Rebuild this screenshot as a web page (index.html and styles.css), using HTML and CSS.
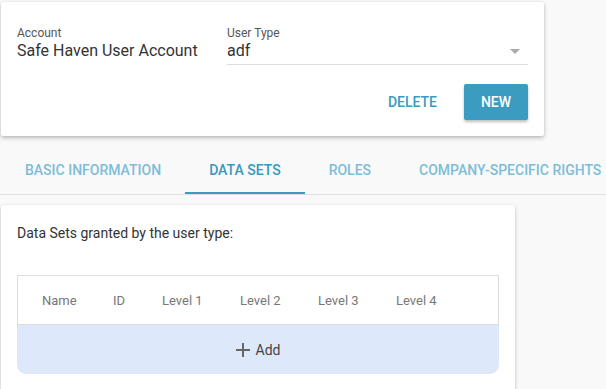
FILE: index.html
```html
<!DOCTYPE html>
<html lang="en">
<head>
  <meta charset="UTF-8" />
  <meta name="viewport" content="width=device-width, initial-scale=1.0" />
  <title>User Type</title>
  <link rel="stylesheet" href="styles.css">
</head>
<body>
  <div class="header-card">
    <div class="fields">
      <div class="field account">
        <div class="field-label">Account</div>
        <div class="field-value">Safe Haven User Account</div>
      </div>
      <div class="field select">
        <div class="field-label">User Type</div>
        <div class="select-box">
          <span class="field-value">adf</span>
          <span class="arrow"></span>
        </div>
      </div>
    </div>
    <div class="actions">
      <button class="btn-flat">DELETE</button>
      <button class="btn-raised">NEW</button>
    </div>
  </div>

  <div class="tabs">
    <div class="tab">BASIC INFORMATION</div>
    <div class="tab active">DATA SETS</div>
    <div class="tab">ROLES</div>
    <div class="tab">COMPANY-SPECIFIC RIGHTS</div>
  </div>

  <div class="content-card">
    <p class="intro">Data Sets granted by the user type:</p>
    <div class="grid">
      <div class="grid-head">
        <span>Name</span>
        <span>ID</span>
        <span>Level 1</span>
        <span>Level 2</span>
        <span>Level 3</span>
        <span>Level 4</span>
      </div>
      <div class="grid-add">
        <svg width="14" height="14" viewBox="0 0 14 14"><path d="M7 0v14M0 7h14" stroke="#666" stroke-width="2" fill="none"/></svg>
        <span>Add</span>
      </div>
    </div>
  </div>
</body>
</html>
```

FILE: styles.css
```css
body, html {
  margin: 0;
  padding: 0;
  height: 100%;
  overflow: hidden;
  background: #f9f9f9;
  font-family: Roboto, "Liberation Sans", sans-serif;
  color: #333;
}
.header-card {
  margin: 2px 0 0 1px;
  width: 543px;
  height: 134px;
  box-sizing: border-box;
  padding: 24px 16px 16px 16px;
  background: #fff;
  border-radius: 2px;
  box-shadow: 0 2px 4px rgba(0, 0, 0, 0.25), 0 0 2px rgba(0, 0, 0, 0.08);
  display: flex;
  flex-direction: column;
}
.fields {
  display: flex;
}
.field.account {
  width: 210px;
}
.field.select {
  flex: 1;
}
.field-label {
  font-size: 12px;
  color: #555;
  line-height: 14px;
}
.field-value {
  font-size: 16px;
  line-height: 22px;
  color: #333;
}
.select-box {
  display: flex;
  align-items: center;
  justify-content: space-between;
  border-bottom: 1px solid #ddd;
  padding-bottom: 2px;
}
.arrow {
  width: 0;
  height: 0;
  border-left: 5px solid transparent;
  border-right: 5px solid transparent;
  border-top: 5px solid #aaa;
  margin-right: 8px;
}
.actions {
  margin-top: auto;
  display: flex;
  justify-content: flex-end;
  gap: 11px;
}
.btn-flat, .btn-raised {
  font-family: Roboto, "Liberation Sans", sans-serif;
  font-size: 14px;
  font-weight: 500;
  height: 36px;
  padding: 0 16px;
  border: none;
  border-radius: 2px;
  cursor: pointer;
}
.btn-flat {
  background: none;
  color: #3b9bc1;
}
.btn-raised {
  width: 64px;
  background: #3b9bc1;
  color: #fff;
  box-shadow: 0 2px 3px rgba(0, 0, 0, 0.25);
}
.tabs {
  margin-top: 10px;
  display: flex;
  border-bottom: 1px solid #e0e0e0;
  padding-left: 1px;
  white-space: nowrap;
}
.tab {
  flex-shrink: 0;
  height: 48px;
  line-height: 48px;
  padding: 0 24px;
  box-sizing: border-box;
  font-size: 14px;
  font-weight: 500;
  color: #7dbdd7;
}
.tab.active {
  color: #3898be;
  border-bottom: 2px solid #3b9bc1;
}
.content-card {
  margin: 10px 0 0 1px;
  width: 514px;
  box-sizing: border-box;
  padding: 20px 16px 16px 16px;
  background: #fff;
  border-radius: 2px;
  box-shadow: 0 2px 4px rgba(0, 0, 0, 0.2), 0 0 2px rgba(0, 0, 0, 0.08);
}
.intro {
  margin: 0 0 34px 0;
  font-size: 14px;
  line-height: 16px;
  color: #333;
}
.grid {
  width: 482px;
}
.grid-head {
  display: grid;
  grid-template-columns: 71px 49px 78px 78px 78px auto;
  padding-left: 24px;
  height: 48px;
  align-items: center;
  border: 1px solid #ddd;
  font-size: 13px;
  color: #777;
}
.grid-add {
  height: 49px;
  background: #dee8fb;
  border-radius: 0 0 9px 9px;
  display: flex;
  align-items: center;
  justify-content: center;
  gap: 6px;
  font-size: 14px;
  color: #444;
}
```
